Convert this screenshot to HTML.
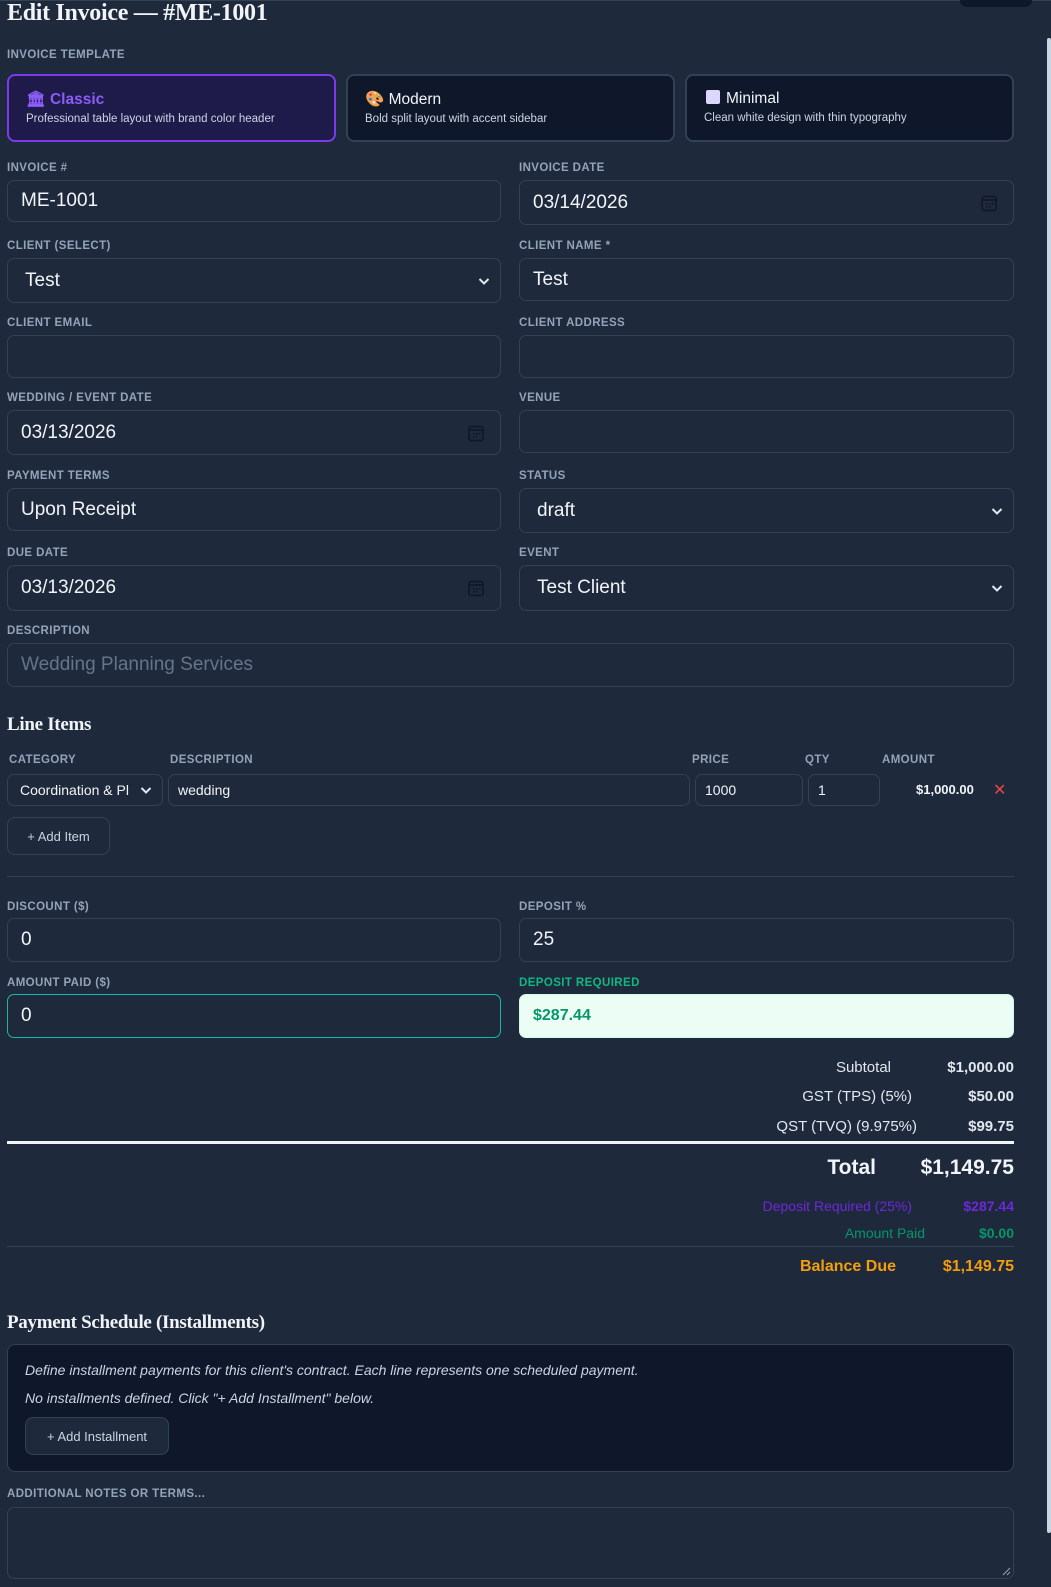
<!DOCTYPE html>
<html><head><meta charset="utf-8"><style>
*{box-sizing:border-box;margin:0;padding:0}
html,body{width:1051px;height:1587px;overflow:hidden;background:#1e293b;font-family:"Liberation Sans",sans-serif;color:#e2e8f0}
.a{position:absolute}
.lbl{position:absolute;font-size:11.5px;font-weight:bold;color:#94a3b8;letter-spacing:.4px;text-transform:uppercase}
.in{position:absolute;border:1px solid #334155;border-radius:7px;background:#1e293b;font-size:19px;color:#f1f5f9;padding-left:13px;display:flex;align-items:center}
.h{position:absolute;font-family:"Liberation Serif",serif;font-weight:bold;color:#f1f5f9;letter-spacing:-.3px}
.card{position:absolute;top:74px;height:68px;border:2px solid #334155;border-radius:8px;background:#0f172a;padding:14px 0 0 17px}
.card b{font-weight:normal;font-size:15.5px;color:#f1f5f9;display:block}
.card span{font-size:11.5px;color:#cbd5e1;display:block;margin-top:4px}
.chev{position:absolute;right:10px;top:50%;margin-top:-5px}
.cal{position:absolute;right:16px;top:50%;margin-top:-8px}
.btn{position:absolute;border:1px solid #334155;border-radius:8px;background:#1e293b;font-size:13px;color:#cbd5e1;display:flex;align-items:center;justify-content:center}
.r{position:absolute;text-align:right;font-size:15px}
</style></head><body>
<div class="a" style="left:0;top:0;width:1051px;height:1px;background:#334155"></div>
<div class="a" style="left:960px;top:0;width:72px;height:7px;background:#0f172a;border-radius:0 0 8px 8px"></div>
<div class="a" style="left:1047px;top:38px;width:4px;height:1495px;background:#cbd5e1;border-radius:2px"></div>

<div class="h" style="left:7px;top:0px;font-size:24px">Edit Invoice — #ME-1001</div>
<div class="lbl" style="left:7px;top:49px">Invoice Template</div>

<div class="card" style="left:7px;width:329px;border-color:#7c3aed;background:#1e1b4b"><b style="color:#8b5cf6;font-weight:bold">🏛 Classic</b><span>Professional table layout with brand color header</span></div>
<div class="card" style="left:346px;width:329px"><b>🎨 Modern</b><span>Bold split layout with accent sidebar</span></div>
<div class="card" style="left:685px;width:329px"><b><span style="display:inline-block;width:14px;height:14px;background:#ddd6fe;border-radius:2px;vertical-align:-1px;margin:0 6px 0 2px"></span>Minimal</b><span>Clean white design with thin typography</span></div>

<div class="lbl" style="left:7px;top:162px">Invoice #</div>
<div class="in" style="left:7px;top:180px;width:494px;height:42px">ME-1001</div>
<div class="lbl" style="left:519px;top:162px">Invoice Date</div>
<div class="in" style="left:519px;top:180px;width:495px;height:45px">03/14/2026<svg class="cal" width="16" height="17" viewBox="0 0 16 17"><rect x="1" y="1.5" width="14" height="14" rx="2.5" fill="none" stroke="#0f172a" stroke-width="1.6"/><line x1="1" y1="5" x2="15" y2="5" stroke="#0f172a" stroke-width="1.6"/><g fill="#0f172a"><rect x="5" y="8" width="1.6" height="1.6"/><rect x="8" y="8" width="1.6" height="1.6"/><rect x="11" y="8" width="1.6" height="1.6"/><rect x="5" y="11" width="1.6" height="1.6"/><rect x="8" y="11" width="1.6" height="1.6"/></g></svg></div>

<div class="lbl" style="left:7px;top:240px">Client (Select)</div>
<div class="in" style="left:7px;top:258px;width:494px;height:45px;padding-left:17px">Test<svg class="chev" width="12" height="10" viewBox="0 0 12 10"><path d="M1.5 3l4.5 4.5 4.5-4.5" fill="none" stroke="#e2e8f0" stroke-width="2"/></svg></div>
<div class="lbl" style="left:519px;top:240px">Client Name *</div>
<div class="in" style="left:519px;top:258px;width:495px;height:43px">Test</div>

<div class="lbl" style="left:7px;top:317px">Client Email</div>
<div class="in" style="left:7px;top:335px;width:494px;height:43px"></div>
<div class="lbl" style="left:519px;top:317px">Client Address</div>
<div class="in" style="left:519px;top:335px;width:495px;height:43px"></div>

<div class="lbl" style="left:7px;top:392px">Wedding / Event Date</div>
<div class="in" style="left:7px;top:410px;width:494px;height:45px">03/13/2026<svg class="cal" width="16" height="17" viewBox="0 0 16 17"><rect x="1" y="1.5" width="14" height="14" rx="2.5" fill="none" stroke="#0f172a" stroke-width="1.6"/><line x1="1" y1="5" x2="15" y2="5" stroke="#0f172a" stroke-width="1.6"/><g fill="#0f172a"><rect x="5" y="8" width="1.6" height="1.6"/><rect x="8" y="8" width="1.6" height="1.6"/><rect x="11" y="8" width="1.6" height="1.6"/><rect x="5" y="11" width="1.6" height="1.6"/><rect x="8" y="11" width="1.6" height="1.6"/></g></svg></div>
<div class="lbl" style="left:519px;top:392px">Venue</div>
<div class="in" style="left:519px;top:410px;width:495px;height:43px"></div>

<div class="lbl" style="left:7px;top:470px">Payment Terms</div>
<div class="in" style="left:7px;top:488px;width:494px;height:43px">Upon Receipt</div>
<div class="lbl" style="left:519px;top:470px">Status</div>
<div class="in" style="left:519px;top:488px;width:495px;height:45px;padding-left:17px">draft<svg class="chev" width="12" height="10" viewBox="0 0 12 10"><path d="M1.5 3l4.5 4.5 4.5-4.5" fill="none" stroke="#e2e8f0" stroke-width="2"/></svg></div>

<div class="lbl" style="left:7px;top:547px">Due Date</div>
<div class="in" style="left:7px;top:565px;width:494px;height:46px">03/13/2026<svg class="cal" width="16" height="17" viewBox="0 0 16 17"><rect x="1" y="1.5" width="14" height="14" rx="2.5" fill="none" stroke="#0f172a" stroke-width="1.6"/><line x1="1" y1="5" x2="15" y2="5" stroke="#0f172a" stroke-width="1.6"/><g fill="#0f172a"><rect x="5" y="8" width="1.6" height="1.6"/><rect x="8" y="8" width="1.6" height="1.6"/><rect x="11" y="8" width="1.6" height="1.6"/><rect x="5" y="11" width="1.6" height="1.6"/><rect x="8" y="11" width="1.6" height="1.6"/></g></svg></div>
<div class="lbl" style="left:519px;top:547px">Event</div>
<div class="in" style="left:519px;top:565px;width:495px;height:46px;padding-left:17px">Test Client<svg class="chev" width="12" height="10" viewBox="0 0 12 10"><path d="M1.5 3l4.5 4.5 4.5-4.5" fill="none" stroke="#e2e8f0" stroke-width="2"/></svg></div>

<div class="lbl" style="left:7px;top:625px">Description</div>
<div class="in" style="left:7px;top:643px;width:1007px;height:44px;color:#64748b">Wedding Planning Services</div>

<div class="h" style="left:7px;top:714px;font-size:19px">Line Items</div>
<div class="lbl" style="left:9px;top:754px">Category</div>
<div class="lbl" style="left:170px;top:754px">Description</div>
<div class="lbl" style="left:692px;top:754px">Price</div>
<div class="lbl" style="left:805px;top:754px">QTY</div>
<div class="lbl" style="left:882px;top:754px">Amount</div>
<div class="in" style="left:7px;top:774px;width:156px;height:32px;font-size:14px;padding-left:12px">Coordination &amp; Pl<svg class="chev" width="12" height="10" viewBox="0 0 12 10"><path d="M1.5 3l4.5 4.5 4.5-4.5" fill="none" stroke="#e2e8f0" stroke-width="2"/></svg></div>
<div class="in" style="left:168px;top:774px;width:522px;height:32px;font-size:14px;padding-left:9px">wedding</div>
<div class="in" style="left:695px;top:774px;width:108px;height:32px;font-size:14px;padding-left:9px">1000</div>
<div class="in" style="left:808px;top:774px;width:72px;height:32px;font-size:14px;padding-left:9px">1</div>
<div class="a" style="left:916px;top:782px;font-size:13px;font-weight:bold;color:#f1f5f9">$1,000.00</div>
<div class="a" style="left:993px;top:780px;font-size:16px;color:#ef4444">✕</div>
<div class="btn" style="left:7px;top:817px;width:103px;height:38px">+ Add Item</div>

<div class="a" style="left:7px;top:876px;width:1007px;height:1px;background:#334155"></div>

<div class="lbl" style="left:7px;top:901px">Discount ($)</div>
<div class="in" style="left:7px;top:918px;width:494px;height:44px">0</div>
<div class="lbl" style="left:519px;top:901px">Deposit %</div>
<div class="in" style="left:519px;top:918px;width:495px;height:44px">25</div>

<div class="lbl" style="left:7px;top:977px">Amount Paid ($)</div>
<div class="in" style="left:7px;top:994px;width:494px;height:44px;border-color:#14b8a6">0</div>
<div class="lbl" style="left:519px;top:977px;color:#10b981">Deposit Required</div>
<div class="in" style="left:519px;top:994px;width:495px;height:44px;background:#ecfdf5;border-color:#d1fae5;font-size:16px;font-weight:bold;color:#059669">$287.44</div>

<div class="r" style="right:160px;top:1059px;color:#e2e8f0">Subtotal</div>
<div class="r" style="right:37px;top:1059px;font-weight:bold">$1,000.00</div>
<div class="r" style="right:139px;top:1088px">GST (TPS) (5%)</div>
<div class="r" style="right:37px;top:1088px;font-weight:bold">$50.00</div>
<div class="r" style="right:134px;top:1118px">QST (TVQ) (9.975%)</div>
<div class="r" style="right:37px;top:1118px;font-weight:bold">$99.75</div>
<div class="a" style="left:7px;top:1141px;width:1007px;height:3px;background:#f1f5f9"></div>
<div class="r" style="right:175px;top:1156px;font-size:21px;font-weight:bold;color:#f1f5f9">Total</div>
<div class="r" style="right:37px;top:1156px;font-size:21px;font-weight:bold;color:#f1f5f9">$1,149.75</div>
<div class="r" style="right:139px;top:1198px;font-size:14px;color:#6d28d9">Deposit Required (25%)</div>
<div class="r" style="right:37px;top:1198px;font-size:14px;font-weight:bold;color:#6d28d9">$287.44</div>
<div class="r" style="right:126px;top:1225px;font-size:14px;color:#059669">Amount Paid</div>
<div class="r" style="right:37px;top:1225px;font-size:14px;font-weight:bold;color:#059669">$0.00</div>
<div class="a" style="left:7px;top:1246px;width:1007px;height:1px;background:#334155"></div>
<div class="r" style="right:155px;top:1258px;font-size:16px;font-weight:bold;color:#f59e0b">Balance Due</div>
<div class="r" style="right:37px;top:1258px;font-size:16px;font-weight:bold;color:#f59e0b">$1,149.75</div>

<div class="h" style="left:7px;top:1312px;font-size:19px">Payment Schedule (Installments)</div>
<div class="a" style="left:7px;top:1344px;width:1007px;height:128px;background:#0f172a;border:1px solid #334155;border-radius:8px"></div>
<div class="a" style="left:25px;top:1362px;font-size:14px;font-style:italic;color:#cbd5e1">Define installment payments for this client's contract. Each line represents one scheduled payment.</div>
<div class="a" style="left:25px;top:1390px;font-size:14px;font-style:italic;color:#cbd5e1">No installments defined. Click "+ Add Installment" below.</div>
<div class="btn" style="left:25px;top:1417px;width:144px;height:38px">+ Add Installment</div>

<div class="lbl" style="left:7px;top:1488px">Additional Notes or Terms...</div>
<div class="in" style="left:7px;top:1507px;width:1007px;height:72px"></div>
<svg class="a" style="left:1001px;top:1566px" width="10" height="10"><path d="M9 2L2 9M9 6L6 9" stroke="#94a3b8" stroke-width="1"/></svg>
</body></html>
